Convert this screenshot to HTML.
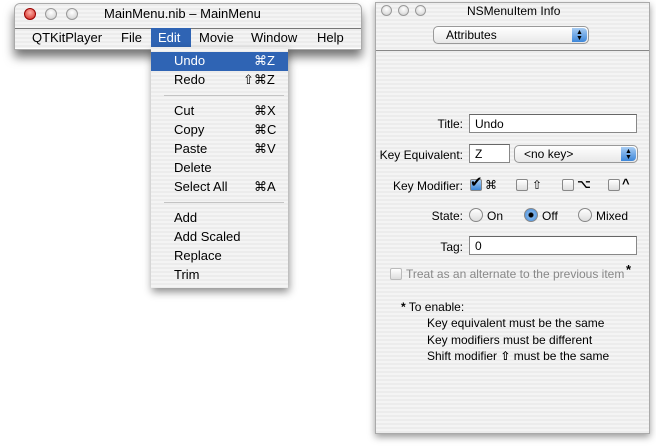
<!DOCTYPE html>
<html><head><meta charset="utf-8"><style>
*{margin:0;padding:0;box-sizing:border-box}
body{width:656px;height:446px;background:#fff;position:relative;overflow:hidden;font-family:"Liberation Sans","DejaVu Sans",sans-serif;color:#000}
.a{position:absolute;white-space:nowrap}
.stripe{background:repeating-linear-gradient(#ececec 0 2px,#f4f4f4 2px 4px)}
.light{position:absolute;width:12px;height:12px;border-radius:50%;border:1px solid #999;background:radial-gradient(circle at 50% 35%,#fff,#ccc)}
.m{font-size:13px}
.s{font-size:12px}
.r{position:absolute;white-space:nowrap;font-size:12px;right:193px;text-align:right}
.field{position:absolute;background:#fff;border:1px solid #888;border-top-color:#666;font-size:12px;padding:2px 5px}
.pop{position:absolute;border:1px solid #999;border-radius:5px;background:linear-gradient(#fff,#e8e8e8);font-size:12px;padding:1px 12px}
.pop .arr{position:absolute;right:1px;top:1px;bottom:1px;width:15px;border-radius:0 4px 4px 0;background:linear-gradient(#a8cdf3,#3d87d9);color:#000;font-size:7px;line-height:6px;text-align:center;padding-top:2px}
.cb{position:absolute;width:12px;height:12px;border:1px solid #888;border-radius:2px;background:linear-gradient(#fff,#ddd)}
.rb{position:absolute;width:14px;height:14px;border:1px solid #888;border-radius:50%;background:linear-gradient(#fff,#ddd)}
</style></head><body>
<div class="a" style="left:14px;top:3px;width:348px;height:47px;box-shadow:0 7px 10px rgba(0,0,0,.55);border-radius:6px 6px 0 0;border:1px solid #aaa"></div>
<div class="a stripe" style="left:15px;top:4px;width:346px;height:24px;border-radius:6px 6px 0 0"></div>
<div class="light" style="left:24px;top:8px;background:radial-gradient(circle at 50% 35%,#ffb0a8,#d0231a);border-color:#900"></div>
<div class="light" style="left:45px;top:8px"></div>
<div class="light" style="left:66px;top:8px"></div>
<div class="a m" style="left:104px;top:6px">MainMenu.nib – MainMenu</div>
<div class="a stripe" style="left:15px;top:28px;width:346px;height:20px;border-top:1px solid #777"></div>
<div class="a" style="left:151px;top:28px;width:40px;height:20px;background:#2f64b4"></div>
<div class="a m" style="left:32px;top:30px">QTKitPlayer</div>
<div class="a m" style="left:121px;top:30px">File</div>
<div class="a m" style="left:158px;top:30px;color:#fff">Edit</div>
<div class="a m" style="left:199px;top:30px">Movie</div>
<div class="a m" style="left:251px;top:30px">Window</div>
<div class="a m" style="left:317px;top:30px">Help</div>
<div class="a stripe" style="left:151px;top:47px;width:137px;height:241px;box-shadow:1px 4px 8px rgba(0,0,0,.45)"></div>
<div class="a" style="left:151px;top:52px;width:137px;height:19px;background:#2f64b4"></div>
<div class="a" style="left:164px;top:95px;width:120px;height:1px;background:#c4c4c4"></div>
<div class="a" style="left:164px;top:202px;width:120px;height:1px;background:#c4c4c4"></div>
<div class="a m" style="left:174px;top:53px;color:#fff">Undo</div><div class="a m" style="left:254px;top:53px;color:#fff">⌘Z</div>
<div class="a m" style="left:174px;top:72px">Redo</div><div class="a m" style="left:243px;top:72px">⇧⌘Z</div>
<div class="a m" style="left:174px;top:103px">Cut</div><div class="a m" style="left:254px;top:103px">⌘X</div>
<div class="a m" style="left:174px;top:122px">Copy</div><div class="a m" style="left:254px;top:122px">⌘C</div>
<div class="a m" style="left:174px;top:141px">Paste</div><div class="a m" style="left:254px;top:141px">⌘V</div>
<div class="a m" style="left:174px;top:160px">Delete</div>
<div class="a m" style="left:174px;top:179px">Select All</div><div class="a m" style="left:254px;top:179px">⌘A</div>
<div class="a m" style="left:174px;top:210px">Add</div>
<div class="a m" style="left:174px;top:229px">Add Scaled</div>
<div class="a m" style="left:174px;top:248px">Replace</div>
<div class="a m" style="left:174px;top:267px">Trim</div>
<div class="a stripe" style="left:375px;top:2px;width:275px;height:432px;border:1px solid #aaa;box-shadow:0 3px 7px rgba(0,0,0,.4)"></div>
<div class="light" style="left:381px;top:5px;width:11px;height:11px"></div>
<div class="light" style="left:398px;top:5px;width:11px;height:11px"></div>
<div class="light" style="left:415px;top:5px;width:11px;height:11px"></div>
<div class="a s" style="left:467px;top:4px">NSMenuItem Info</div>
<div class="pop" style="left:433px;top:26px;width:156px;height:18px">Attributes<div class="arr">▲<br>▼</div></div>
<div class="a" style="left:376px;top:50px;width:273px;height:1px;background:#888"></div>
<div class="r" style="top:117px">Title:</div>
<div class="field" style="left:469px;top:114px;width:168px;height:19px">Undo</div>
<div class="r" style="top:148px">Key Equivalent:</div>
<div class="field" style="left:469px;top:144px;width:41px;height:19px">Z</div>
<div class="pop" style="left:514px;top:145px;width:124px;height:18px;padding-left:9px">&lt;no key&gt;<div class="arr">▲<br>▼</div></div>
<div class="r" style="top:179px">Key Modifier:</div>
<div class="cb" style="left:470px;top:179px;background:linear-gradient(#a8cdf3,#3d87d9)"></div>
<div class="a" style="left:470px;top:173px;font-size:15px;font-weight:bold">✔</div>
<div class="a s" style="left:485px;top:178px">⌘</div>
<div class="cb" style="left:516px;top:179px"></div><div class="a s" style="left:532px;top:178px">⇧</div>
<div class="cb" style="left:562px;top:179px"></div><div class="a s" style="left:577px;top:177px;font-weight:bold">⌥</div>
<div class="cb" style="left:608px;top:179px"></div><div class="a" style="left:622px;top:176px;font-weight:bold;font-size:13px">^</div>
<div class="r" style="top:209px">State:</div>
<div class="rb" style="left:469px;top:208px"></div><div class="a s" style="left:487px;top:209px">On</div>
<div class="rb" style="left:524px;top:208px;background:radial-gradient(#000 2px,#7fb3ea 3px,#3d87d9)"></div><div class="a s" style="left:542px;top:209px">Off</div>
<div class="rb" style="left:578px;top:208px"></div><div class="a s" style="left:596px;top:209px">Mixed</div>
<div class="r" style="top:240px">Tag:</div>
<div class="field" style="left:469px;top:236px;width:168px;height:19px">0</div>
<div class="cb" style="left:390px;top:268px;border-color:#bbb"></div>
<div class="a s" style="left:406px;top:267px;color:#888">Treat as an alternate to the previous item</div>
<div class="a" style="left:626px;top:262px;font-size:13px;font-weight:bold">*</div>
<div class="a s" style="left:401px;top:300px"><b>*</b> To enable:</div>
<div class="a s" style="left:427px;top:316px">Key equivalent must be the same</div>
<div class="a s" style="left:427px;top:333px">Key modifiers must be different</div>
<div class="a s" style="left:427px;top:349px">Shift modifier <b>⇧</b> must be the same</div>
</body></html>
